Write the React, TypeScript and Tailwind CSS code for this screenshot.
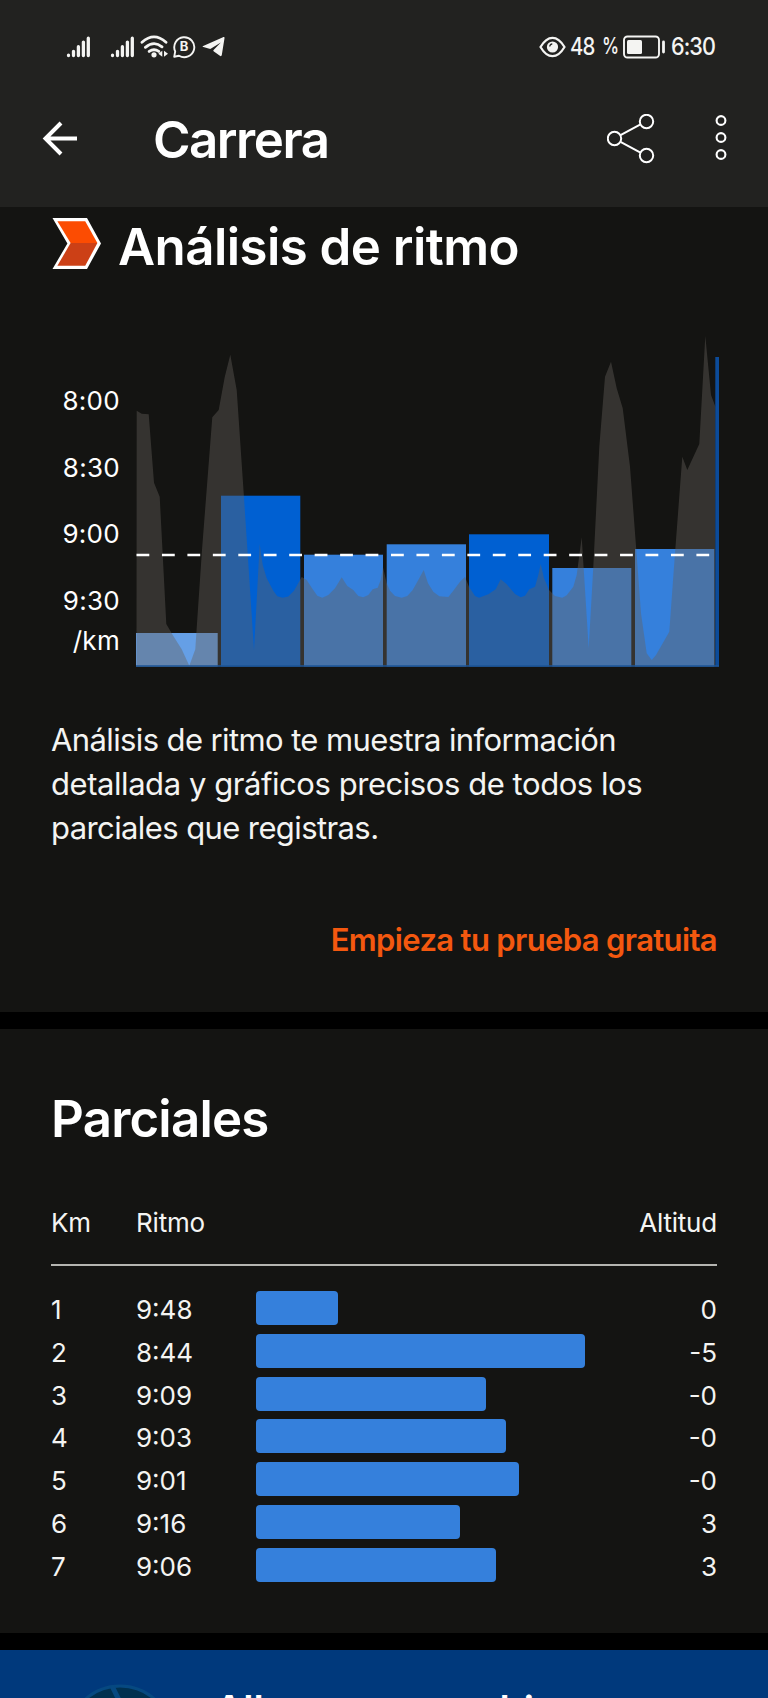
import type { ReactNode } from "react";

const SPLITS = [
  { km: 1, pace: "9:48", width: 82, altitude: "0" },
  { km: 2, pace: "8:44", width: 329, altitude: "-5" },
  { km: 3, pace: "9:09", width: 230, altitude: "-0" },
  { km: 4, pace: "9:03", width: 250, altitude: "-0" },
  { km: 5, pace: "9:01", width: 263, altitude: "-0" },
  { km: 6, pace: "9:16", width: 203.5, altitude: "3" },
  { km: 7, pace: "9:06", width: 240, altitude: "3" },
];

const PACE_BARS = [
  { x: 136, w: 81.7, y: 633, fill: "#659fe6" },
  { x: 221, w: 79.3, y: 495.7, fill: "#0060d2" },
  { x: 304, w: 79, y: 554.7, fill: "#3580dc" },
  { x: 386.7, w: 79.3, y: 544.3, fill: "#3580dc" },
  { x: 469, w: 80, y: 534.3, fill: "#0060d2" },
  { x: 552.3, w: 79, y: 568, fill: "#3580dc" },
  { x: 635, w: 79.3, y: 549, fill: "#3580dc" },
];

const ELEVATION =
  "136.5,666.5 136.7,410.7 141.7,413.7 148.7,414.3 154,482.7 159.7,496.7 166.3,624 172.7,635 181.7,649.3 189.3,665.7 195.3,649.3 196.7,628 202,550 212.3,417.3 218.7,410 224.7,377.3 230.3,354.7 236.7,390 243.7,493.3 254,650 259.7,544 262.7,565 266.7,578.3 273.3,590.7 277.3,596.2 282.7,597.7 288.3,596.5 294,590.7 301.7,577 306.7,580 311.7,587.7 317.3,595.7 322.3,597.7 328.3,595 335,588.3 341.7,577.3 347.3,586 353.3,590 358.3,596 363.3,597.3 368.3,595 372.7,589.3 377.7,587.7 380.7,580 383,567.3 386.7,583.3 390,590.7 395,596 401.7,597.7 407.3,596 412.7,590 418.3,580 423.7,570 428,583.3 433.3,591.7 439.3,596.3 448.3,597 453.3,590.7 460,581.7 465,576.7 469,586.7 475,596 479,597.7 488.3,594.3 495.7,589.3 500.7,579.3 506.7,584.3 515,594 520.7,597.3 525,595.7 529.3,589.3 535,586.7 538.3,575 540.7,564 544,578.3 549,590 555,596 562.3,597.7 566.7,595.3 573.3,586.7 576.7,575 581.7,537.3 588.7,648.3 593.3,566.7 599.3,446.7 605,376.7 611,361.7 616.7,388.3 622.7,408.3 630,466.7 636.3,550 641,613.3 646.7,653.3 651.7,660 656,655 669.3,631.7 674,566.7 682.3,456.7 687.3,470 699.3,444 705.3,336 711,395 715.5,407 715.5,666.5";

function SignalIcon() {
  return (
    <svg width="26" height="24" viewBox="0 0 26 24" fill="none" stroke="#f4f4f2" strokeWidth="3.3" strokeLinecap="round">
      <path d="M2.5 20.2v.3M7.5 16.3v4.2M12.4 11.7v8.8M17.4 7.1v13.4M22.3 3.2v17.3" />
    </svg>
  );
}

function StatusBar() {
  return (
    <div className="flex h-[92px] items-center justify-between pt-[1px] pr-[54px] pl-[66px] text-[#f4f4f2]">
      <div className="flex items-center">
        <SignalIcon />
        <div className="ml-[18px] flex"><SignalIcon /></div>
        <svg className="ml-1 shrink-0" width="30" height="26" viewBox="0 0 30 26" fill="none" stroke="#f4f4f2" strokeWidth="2.8">
          <path d="M2 8.2Q14 -2.4 26 8.2M5.4 13.3Q14 6.2 22 12.8M9.2 17.4Q14 14 18.8 17.4" strokeLinecap="round" />
          <circle cx="14" cy="20.8" r="2.6" fill="#f4f4f2" stroke="none" />
          <path d="M22.3 16.8v6l-4-3zM24 16.8v6l4-3z" fill="#f4f4f2" stroke="none" />
        </svg>
        <div className="relative ml-[2px] h-6 w-6">
          <svg width="24" height="24" viewBox="0 0 24 24" fill="none" stroke="#f4f4f2" strokeWidth="1.9">
            <path d="M2.2 21.8l1-5.4A10 10 0 1 1 7 20.7z" strokeLinejoin="round" />
          </svg>
          <span className="absolute inset-0 flex items-center justify-center text-[13px] font-bold">B</span>
        </div>
        <svg className="ml-[6px]" width="24" height="22" viewBox="0 0 24 22" fill="#f4f4f2">
          <path d="M1.2 9.9 21 1.2c1-.4 1.7.1 1.5 1.1L19.8 19c-.2 1.2-1 1.4-1.9.8l-6-4.3c-.8-.6-.8-1.1-.1-1.7l7-7.2-9.7 6c-.6.4-1.1.4-1.7.2l-6-1.7c-.9-.3-1-.8-.2-1.2z" />
        </svg>
      </div>
      <div className="flex items-center text-[24px] font-medium">
        <svg width="27" height="22" viewBox="0 0 27 22" fill="none" stroke="#f4f4f2" strokeWidth="2.2">
          <path d="M1.5 11C5 5 9 1.8 13.5 1.8S22 5 25.5 11C22 17 18 20.2 13.5 20.2S5 17 1.5 11z" />
          <circle cx="13.5" cy="11" r="5.6" fill="#f4f4f2" stroke="none" />
          <path d="M10.7 10.5q.2-2.4 2.6-2.7" stroke="#222220" strokeWidth="1.2" />
        </svg>
        <span className="ml-[4px] w-[24px] origin-left scale-x-85 tracking-[-1px]">48</span>
        <span className="ml-[8px] w-[17px] origin-left scale-x-75 text-[23px]">%</span>
        <svg className="ml-[4px]" width="43" height="24" viewBox="0 0 43 24" fill="none">
          <rect x="1" y="1.5" width="35" height="21" rx="3.5" stroke="#f4f4f2" strokeWidth="1.9" />
          <rect x="4" y="5" width="15" height="14" rx="1.5" fill="#f4f4f2" />
          <path d="M40.5 7v10" stroke="#f4f4f2" strokeWidth="2.8" strokeLinecap="round" />
        </svg>
        <span className="ml-[5px] w-[43px] origin-left scale-x-90 whitespace-nowrap tracking-[-1px]">6:30</span>
      </div>
    </div>
  );
}

function TopBar() {
  return (
    <div className="flex h-[115px] items-start pt-[22px] pl-[42px]">
      <svg className="mt-[7px]" width="36" height="36" viewBox="0 0 36 36" fill="none" stroke="#fff" strokeWidth="4">
        <path d="M35 17.5H4M19 2 3.5 17.5 19 33" />
      </svg>
      <h1 className="mt-[1px] ml-[75px] w-[400px] text-[51px] leading-[50px] font-semibold tracking-[-1.5px]">Carrera</h1>
      <svg className="ml-[54px]" width="48" height="50" viewBox="0 0 48 50" fill="none" stroke="#fff" strokeWidth="2">
        <circle cx="7.5" cy="24.5" r="6.7" />
        <circle cx="39.5" cy="7.5" r="6.7" />
        <circle cx="39.5" cy="41.5" r="6.7" />
        <path d="m13.5 21.2 20-10.8M13.5 27.8l20 10.8" />
      </svg>
      <svg className="ml-[60px]" width="12" height="50" viewBox="0 0 12 50" fill="none" stroke="#fff" strokeWidth="2.1">
        <circle cx="6" cy="6.5" r="4.4" />
        <circle cx="6" cy="23.5" r="4.4" />
        <circle cx="6" cy="40.5" r="4.4" />
      </svg>
    </div>
  );
}

function Card({ children, className }: { children: ReactNode; className: string }) {
  return <section className={`bg-[#141412] ${className}`}>{children}</section>;
}

function PaceChart() {
  return (
    <div className="flex">
      <div className="w-[69px] shrink-0 pt-[56px] text-right text-[26px] tracking-[0.3px]">
        <p className="h-[66.5px] leading-[30px]">8:00</p>
        <p className="h-[66.5px] leading-[30px]">8:30</p>
        <p className="h-[66.5px] leading-[30px]">9:00</p>
        <p className="h-[40px] leading-[30px]">9:30</p>
        <p className="leading-[30px]">/km</p>
      </div>
      <svg className="ml-[16px] shrink-0" width="584" height="340" viewBox="136 330 584 340">
        {PACE_BARS.map((bar) => (
          <rect key={bar.x} x={bar.x} y={bar.y} width={bar.w} height={666.5 - bar.y} fill={bar.fill} />
        ))}
        <polygon points={ELEVATION} fill="#65625c" fillOpacity="0.41" />
        <rect x="715.3" y="357" width="3.7" height="309.5" fill="#0c4b99" />
        <path d="M136 666H719" stroke="#1c5596" strokeWidth="1.4" />
        {/* average pace */}
        <path d="M136.5 555H714" stroke="#fff" strokeWidth="2.4" strokeDasharray="12.8 12.65" />
      </svg>
    </div>
  );
}

function PaceAnalysis() {
  return (
    <Card className="h-[805px] pr-[51px] pl-[51px]">
      <div className="flex h-[123px] items-start">
        <svg className="mt-[10px] ml-[1px]" width="50" height="53" viewBox="0 0 50 53">
          <path d="M.5 1h34.5L49 26.5 35 52H.5L15.4 26.5z" fill="#fff" />
          <path d="M5.4 4.2h27.8L45.4 26H18.6z" fill="#fc4c02" />
          <path d="M18.6 26h26.8L33.2 48.8H5.4z" fill="#cc4016" />
        </svg>
        <h2 className="mt-[15px] ml-[16px] text-[51px] leading-[50px] font-semibold tracking-[-0.55px] whitespace-nowrap">Análisis de ritmo</h2>
      </div>
      <PaceChart />
      <p className="mt-[48px] text-[31px] leading-[44px] whitespace-nowrap text-[#f4f4f2]">
        <span className="block tracking-[-0.61px]">Análisis de ritmo te muestra información</span>
        <span className="block tracking-[-0.44px]">detallada y gráficos precisos de todos los</span>
        <span className="block tracking-[-0.6px]">parciales que registras.</span>
      </p>
      <a className="mt-[68px] block text-right text-[31px] leading-[44px] font-semibold tracking-[-0.65px] text-[#f4580f]">
        Empieza tu prueba gratuita
      </a>
    </Card>
  );
}

function SplitsTable() {
  return (
    <Card className="mt-[17px] h-[604px] px-[51px] pt-[65px]">
      <h2 className="text-[51px] leading-[50px] font-semibold tracking-[-0.8px]">Parciales</h2>
      <div className="mt-[61px] flex h-[61px] border-b-2 border-[#b5b5b1] text-[26px] leading-[36px] tracking-[-0.2px] text-[#f4f4f2]">
        <span className="w-[85px]">Km</span>
        <span>Ritmo</span>
        <span className="ml-auto">Altitud</span>
      </div>
      <div className="mt-[25px] flex flex-col gap-[8.75px]">
        {SPLITS.map((split) => (
          <div key={split.km} className="flex h-[34px] text-[26px] leading-[38px] text-[#f4f4f2]">
            <span className="w-[85px]">{split.km}</span>
            <span className="w-[120px]">{split.pace}</span>
            <div className="h-[34px] rounded-[4px] bg-[#3580dc]" style={{ width: split.width }} />
            <span className="ml-auto">{split.altitude}</span>
          </div>
        ))}
      </div>
    </Card>
  );
}

function PromoBanner() {
  return (
    <section className="mt-[17px] flex h-[48px] overflow-hidden bg-[#00397c] pl-[66px]">
      <svg className="mt-[34px] shrink-0" width="108" height="108" viewBox="0 0 108 108" fill="#00304f" stroke="#064981" strokeWidth="3">
        <circle cx="54" cy="54" r="52" />
        <path d="M46 2 60 30" strokeWidth="5" />
      </svg>
      <p className="mt-[35px] ml-[41px] text-[39px] leading-[50px] font-semibold whitespace-nowrap">Allana sus cambios</p>
    </section>
  );
}

export default function App() {
  return (
    <main className="h-[1698px] w-[768px] overflow-hidden bg-black font-['Inter','Liberation_Sans',sans-serif] text-white">
      <header className="bg-[#222220]">
        <StatusBar />
        <TopBar />
      </header>
      <PaceAnalysis />
      <SplitsTable />
      <PromoBanner />
    </main>
  );
}
